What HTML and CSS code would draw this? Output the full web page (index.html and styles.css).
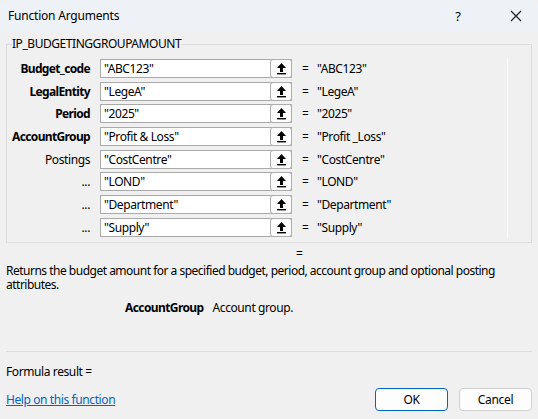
FILE: index.html
```html
<!DOCTYPE html>
<html>
<head>
<meta charset="utf-8">
<link rel="stylesheet" href="styles.css">
</head>
<body>
<div class="window">
  <div class="titlebar">
    <span class="title">Function Arguments</span>
    <span class="help">?</span>
    <span class="close">
      <svg width="12" height="12" viewBox="0 0 12 12"><path d="M1 1 L11 11 M11 1 L1 11" stroke="#1a1a1a" stroke-width="1.1" fill="none"/></svg>
    </span>
  </div>
  <div class="content">
    <fieldset class="args">
      <legend>IP_BUDGETINGGROUPAMOUNT</legend>
      <div class="rows">
        <div class="row"><span class="label bold">Budget_code</span><span class="input"><span class="val">"ABC123"</span><span class="ref"><svg width="11" height="13" viewBox="0 0 11 13"><path d="M5.5 1 L10 6 H7 V10 H4 V6 H1 Z" fill="#000"/><rect x="1" y="11" width="9" height="1.4" fill="#000"/></svg></span></span><span class="eq">=</span><span class="res">"ABC123"</span></div>
        <div class="row"><span class="label bold">LegalEntity</span><span class="input"><span class="val">"LegeA"</span><span class="ref"><svg width="11" height="13" viewBox="0 0 11 13"><path d="M5.5 1 L10 6 H7 V10 H4 V6 H1 Z" fill="#000"/><rect x="1" y="11" width="9" height="1.4" fill="#000"/></svg></span></span><span class="eq">=</span><span class="res">"LegeA"</span></div>
        <div class="row"><span class="label bold">Period</span><span class="input"><span class="val">"2025"</span><span class="ref"><svg width="11" height="13" viewBox="0 0 11 13"><path d="M5.5 1 L10 6 H7 V10 H4 V6 H1 Z" fill="#000"/><rect x="1" y="11" width="9" height="1.4" fill="#000"/></svg></span></span><span class="eq">=</span><span class="res">"2025"</span></div>
        <div class="row"><span class="label bold">AccountGroup</span><span class="input"><span class="val">"Profit &amp; Loss"</span><span class="ref"><svg width="11" height="13" viewBox="0 0 11 13"><path d="M5.5 1 L10 6 H7 V10 H4 V6 H1 Z" fill="#000"/><rect x="1" y="11" width="9" height="1.4" fill="#000"/></svg></span></span><span class="eq">=</span><span class="res">"Profit _Loss"</span></div>
        <div class="row"><span class="label">Postings</span><span class="input"><span class="val">"CostCentre"</span><span class="ref"><svg width="11" height="13" viewBox="0 0 11 13"><path d="M5.5 1 L10 6 H7 V10 H4 V6 H1 Z" fill="#000"/><rect x="1" y="11" width="9" height="1.4" fill="#000"/></svg></span></span><span class="eq">=</span><span class="res">"CostCentre"</span></div>
        <div class="row"><span class="label">...</span><span class="input"><span class="val">"LOND"</span><span class="ref"><svg width="11" height="13" viewBox="0 0 11 13"><path d="M5.5 1 L10 6 H7 V10 H4 V6 H1 Z" fill="#000"/><rect x="1" y="11" width="9" height="1.4" fill="#000"/></svg></span></span><span class="eq">=</span><span class="res">"LOND"</span></div>
        <div class="row"><span class="label">...</span><span class="input"><span class="val">"Department"</span><span class="ref"><svg width="11" height="13" viewBox="0 0 11 13"><path d="M5.5 1 L10 6 H7 V10 H4 V6 H1 Z" fill="#000"/><rect x="1" y="11" width="9" height="1.4" fill="#000"/></svg></span></span><span class="eq">=</span><span class="res">"Department"</span></div>
        <div class="row"><span class="label">...</span><span class="input"><span class="val">"Supply"</span><span class="ref"><svg width="11" height="13" viewBox="0 0 11 13"><path d="M5.5 1 L10 6 H7 V10 H4 V6 H1 Z" fill="#000"/><rect x="1" y="11" width="9" height="1.4" fill="#000"/></svg></span></span><span class="eq">=</span><span class="res">"Supply"</span></div>
      </div>
    </fieldset>
    <div class="result-eq">=</div>
    <p class="desc">Returns the budget amount for a specified budget, period, account group and optional posting attributes.</p>
    <div class="argdesc"><span class="argname">AccountGroup</span><span class="argtext">Account group.</span></div>
    <div class="spacer"></div>
    <div class="sep"></div>
    <div class="formula">Formula result =</div>
    <div class="footer">
      <a class="helplink" href="#">Help on this function</a>
      <span class="btn ok">OK</span>
      <span class="btn cancel">Cancel</span>
    </div>
  </div>
</div>
</body>
</html>
```

FILE: styles.css
```css
html, body {
  margin: 0;
  padding: 0;
  background: #f0f0f0;
}
body {
  font-family: "Noto Sans", "Open Sans", sans-serif;
  font-size: 12px;
  color: #000;
}
.window {
  width: 538px;
  height: 419px;
  display: flex;
  flex-direction: column;
  background: #f0f0f0;
  border-radius: 7px;
  overflow: hidden;
  box-sizing: border-box;
}
.titlebar {
  height: 31px;
  flex: none;
  display: flex;
  align-items: center;
  background: #eef1f5;
  padding-left: 8px;
}
.title {
  flex: 1;
  font-size: 12px;
  letter-spacing: -0.2px;
}
.help {
  width: 20px;
  text-align: center;
  font-size: 13px;
  margin-right: 42px;
}
.close {
  width: 12px;
  height: 12px;
  margin-right: 16px;
  display: flex;
}
.content {
  flex: 1;
  display: flex;
  flex-direction: column;
  padding: 0 6px;
}
.args {
  margin: 6px 0 0 0;
  padding: 0;
  border: 1px solid #dcdcdc;
  min-width: 0;
}
.args legend {
  margin-left: 5px;
  padding: 0;
  line-height: 14px;
  font-size: 12px;
  letter-spacing: -0.45px;
  color: #000;
}
.rows {
  margin: 7px 23px 4px 0;
  padding-top: 1px;
  border-right: 1px solid #ffffff;
  height: 179px;
  display: flex;
  flex-direction: column;
  gap: 3.7px;
}
.row {
  display: flex;
  align-items: center;
  height: 19px;
}
.label {
  width: 83px;
  text-align: right;
  margin-right: 10px;
  letter-spacing: -0.4px;
  flex: none;
}
.bold { font-weight: bold; letter-spacing: -0.65px; }
.input {
  flex: none;
  width: 192px;
  height: 19px;
  box-sizing: border-box;
  background: #fff;
  border: 1px solid #a9a9a9;
  display: flex;
  align-items: center;
  justify-content: space-between;
}
.val {
  padding-left: 3px;
  letter-spacing: -0.4px;
  white-space: nowrap;
}
.ref {
  width: 22px;
  height: 19px;
  box-sizing: border-box;
  margin: 0 -1px 0 0;
  border: 1px solid #adadad;
  border-radius: 3px;
  background: #fdfdfd;
  display: flex;
  align-items: center;
  justify-content: center;
}
.eq {
  margin-left: 10px;
  width: 15px;
  flex: none;
}
.res {
  letter-spacing: -0.4px;
  white-space: nowrap;
}
.result-eq {
  margin: 4px 0 0 290px;
  line-height: 14px;
  height: 14px;
}
.desc {
  margin: 3px 0 0 0;
  line-height: 14px;
  letter-spacing: -0.5px;
  padding-right: 0;
}
.argdesc {
  margin: 9px 0 0 119px;
  line-height: 14px;
  display: flex;
  gap: 9px;
}
.argname { font-weight: bold; letter-spacing: -0.6px; }
.argtext { letter-spacing: -0.4px; }
.spacer { flex: 1; }
.sep {
  height: 1px;
  background: #dcdcdc;
  margin-bottom: 13px;
}
.formula {
  line-height: 14px;
  letter-spacing: -0.4px;
}
.footer {
  display: flex;
  align-items: center;
  margin-top: 9px;
  margin-bottom: 8px;
  height: 23px;
}
.helplink {
  flex: 1;
  color: #0563c1;
  text-decoration: underline;
  letter-spacing: -0.4px;
}
.btn {
  width: 73px;
  height: 23px;
  box-sizing: border-box;
  border-radius: 4px;
  display: flex;
  align-items: center;
  justify-content: center;
  background: #fdfdfd;
  letter-spacing: -0.3px;
}
.ok {
  border: 1px solid #0067c0;
  margin-right: 11px;
}
.cancel {
  border: 1px solid #d0d0d0;
}
```
